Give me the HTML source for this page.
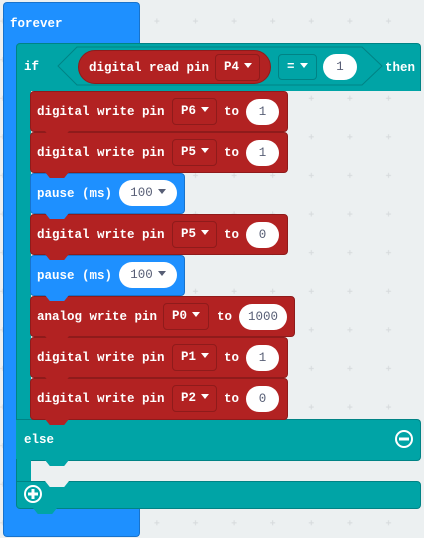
<!DOCTYPE html>
<html><head><meta charset="utf-8"><style>
*{margin:0;padding:0;box-sizing:border-box}
body{width:424px;height:538px;overflow:hidden;position:relative;background:#ecf0f1;font-family:"Liberation Mono",monospace;font-weight:bold;font-size:12.5px;color:#fff}
.a{position:absolute}
.blk{position:absolute;border-radius:4px}
.red{background:#b22222;border:1px solid #8f1b1b}
.blue{background:#1e90ff;border:1px solid #1873cc}
.teal{background:#00a4a6;border:1px solid #008385}
.t{position:absolute;line-height:14px;white-space:nowrap}
.dd{position:absolute;border:1px solid #8f1b1b;border-radius:4px;height:27px;line-height:25px;padding-left:8px;white-space:nowrap}
.ov{position:absolute;background:#fff;color:#575e75;border-radius:14px;height:26px;line-height:26px;text-align:center;font-weight:normal}
.tab{position:absolute;height:6px;width:24px;clip-path:polygon(0 0,100% 0,80% 100%,20% 100%)}
.tri{display:inline-block;width:0;height:0;border-left:4px solid transparent;border-right:4px solid transparent;border-top:5px solid currentColor;vertical-align:middle;margin-left:5px;margin-top:-2px}
</style></head><body>
<svg class="a" style="left:0;top:0" width="424" height="538">
<defs><pattern id="g" x="-17" y="2" width="38.6" height="38.6" patternUnits="userSpaceOnUse"><path d="M17 19h5M19.5 16.5v5" stroke="#d6dadc" stroke-width="1"/></pattern></defs>
<rect width="424" height="538" fill="url(#g)"/></svg>

<!-- forever -->
<div class="blk blue" style="left:3px;top:2px;width:137px;height:42px;border-radius:4px 4px 0 0;border-bottom:none"></div>
<div class="a" style="left:3px;top:43px;width:14px;height:467px;background:#1e90ff;border-left:1px solid #1873cc"></div>
<div class="blk blue" style="left:3px;top:508px;width:137px;height:29px;border-radius:0 0 4px 4px;border-top:none"></div>
<div class="t" style="left:10px;top:17px">forever</div>

<!-- if teal -->
<div class="blk teal" style="left:16px;top:43px;width:405px;height:48px;border-radius:4px 4px 0 0;border-bottom:none"></div>
<div class="a" style="left:16px;top:90px;width:15px;height:330px;background:#00a4a6;border-left:1px solid #008385"></div>
<div class="blk teal" style="left:16px;top:419px;width:405px;height:42px;border-radius:0 4px 4px 0;border-left:none"></div>
<div class="a" style="left:16px;top:459px;width:15px;height:24px;background:#00a4a6;border-left:1px solid #008385"></div>
<div class="blk teal" style="left:16px;top:481px;width:405px;height:28px;border-radius:0 4px 4px 4px;border-top:1px solid #008385"></div>
<div class="tab" style="left:33px;top:508px;background:#00a4a6"></div>
<div class="tab" style="left:45px;top:460px;background:#00a4a6"></div>
<div class="tab" style="left:45px;top:481px;background:#ecf0f1"></div>

<div class="t" style="left:24px;top:60px">if</div>
<svg class="a" style="left:56px;top:46px" width="330" height="42"><path d="M21 1H306L326 20L306 39H21L2 20Z" fill="#00a4a6" stroke="#008385" stroke-width="1"/></svg>
<div class="a" style="left:78px;top:50px;width:193px;height:34px;background:#b22222;border:1px solid #8f1b1b;border-radius:17px"></div>
<div class="t" style="left:89px;top:61px">digital read pin</div>
<div class="dd" style="left:215px;top:54px;width:45px">P4<span class="tri"></span></div>
<div class="dd" style="left:278px;top:54px;width:39px;border-color:#008385;height:26px;line-height:24px">=<span class="tri"></span></div>
<div class="ov" style="left:323px;top:54px;width:34px">1</div>
<div class="t" style="left:385px;top:61px">then</div>

<!-- statements -->
<div class="blk red" style="left:30px;top:91px;width:258px;height:41px"></div>
<div class="t" style="left:37px;top:105px">digital write pin</div>
<div class="dd" style="left:172px;top:98px;width:45px">P6<span class="tri"></span></div>
<div class="t" style="left:224px;top:105px">to</div>
<div class="ov" style="left:246px;top:99px;width:33px">1</div>

<div class="blk red" style="left:30px;top:132px;width:258px;height:41px"></div>
<div class="tab" style="left:45px;top:131px;background:#b22222"></div>
<div class="t" style="left:37px;top:146px">digital write pin</div>
<div class="dd" style="left:172px;top:139px;width:45px">P5<span class="tri"></span></div>
<div class="t" style="left:224px;top:146px">to</div>
<div class="ov" style="left:246px;top:140px;width:33px">1</div>

<div class="blk blue" style="left:30px;top:173px;width:155px;height:41px"></div>
<div class="tab" style="left:45px;top:172px;background:#b22222"></div>
<div class="t" style="left:37px;top:187px">pause (ms)</div>
<div class="ov" style="left:119px;top:180px;width:58px;color:#575e75">100<span class="tri"></span></div>

<div class="blk red" style="left:30px;top:214px;width:258px;height:41px"></div>
<div class="tab" style="left:45px;top:213px;background:#1e90ff"></div>
<div class="t" style="left:37px;top:228px">digital write pin</div>
<div class="dd" style="left:172px;top:221px;width:45px">P5<span class="tri"></span></div>
<div class="t" style="left:224px;top:228px">to</div>
<div class="ov" style="left:246px;top:222px;width:33px">0</div>

<div class="blk blue" style="left:30px;top:255px;width:155px;height:41px"></div>
<div class="tab" style="left:45px;top:254px;background:#b22222"></div>
<div class="t" style="left:37px;top:269px">pause (ms)</div>
<div class="ov" style="left:119px;top:262px;width:58px;color:#575e75">100<span class="tri"></span></div>

<div class="blk red" style="left:30px;top:296px;width:265px;height:41px"></div>
<div class="tab" style="left:45px;top:295px;background:#1e90ff"></div>
<div class="t" style="left:37px;top:310px">analog write pin</div>
<div class="dd" style="left:163px;top:303px;width:46px">P0<span class="tri"></span></div>
<div class="t" style="left:217px;top:310px">to</div>
<div class="ov" style="left:239px;top:304px;width:48px">1000</div>

<div class="blk red" style="left:30px;top:337px;width:258px;height:41px"></div>
<div class="tab" style="left:45px;top:336px;background:#b22222"></div>
<div class="t" style="left:37px;top:351px">digital write pin</div>
<div class="dd" style="left:172px;top:344px;width:45px">P1<span class="tri"></span></div>
<div class="t" style="left:224px;top:351px">to</div>
<div class="ov" style="left:246px;top:345px;width:33px">1</div>

<div class="blk red" style="left:30px;top:378px;width:258px;height:42px"></div>
<div class="tab" style="left:45px;top:377px;background:#b22222"></div>
<div class="t" style="left:37px;top:392px">digital write pin</div>
<div class="dd" style="left:172px;top:385px;width:45px">P2<span class="tri"></span></div>
<div class="t" style="left:224px;top:392px">to</div>
<div class="ov" style="left:246px;top:386px;width:33px">0</div>
<div class="tab" style="left:45px;top:419px;background:#b22222"></div>

<div class="t" style="left:24px;top:433px">else</div>
<svg class="a" style="left:394px;top:429px" width="20" height="20"><circle cx="10" cy="10" r="8" fill="none" stroke="#fff" stroke-width="2"/><rect x="5" y="8.5" width="10" height="3" fill="#fff"/></svg>
<svg class="a" style="left:23px;top:484px" width="20" height="20"><circle cx="10" cy="10" r="8" fill="none" stroke="#fff" stroke-width="2"/><rect x="5" y="8.5" width="10" height="3" fill="#fff"/><rect x="8.5" y="5" width="3" height="10" fill="#fff"/></svg>
</body></html>
